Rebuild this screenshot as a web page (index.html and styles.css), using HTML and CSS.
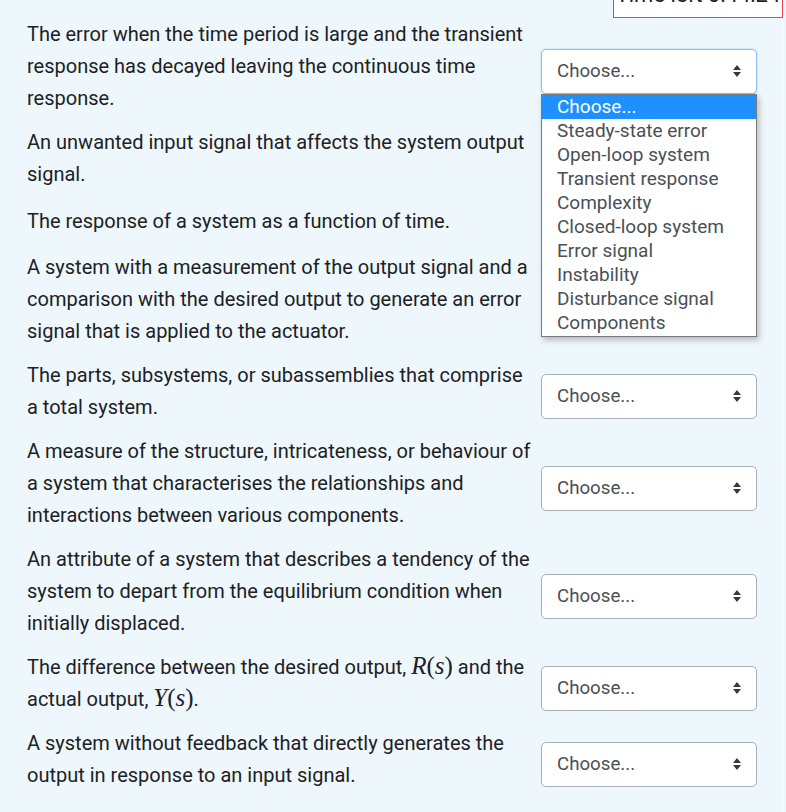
FILE: index.html
```html
<!DOCTYPE html>
<html>
<head>
<meta charset="utf-8">
<link rel="stylesheet" href="styles.css">
</head>
<body>
<div class="page">
  <div class="timer">Time left 0:44:24</div>
  <div class="rows">
    <div class="row">
      <p class="term">The error when the time period is large and the transient response has decayed leaving the continuous time response.</p>
      <div class="sel focus"><span>Choose...</span><svg class="arr" width="10" height="16" viewBox="0 0 10 16"><path d="M1 7 L5 2 L9 7 Z M1 9 L5 14 L9 9 Z" fill="#343a40"/></svg></div>
    </div>
    <div class="row">
      <p class="term">An unwanted input signal that affects the system output signal.</p>
      <div class="sel"><span>Choose...</span><svg class="arr" width="10" height="16" viewBox="0 0 10 16"><path d="M1 7 L5 2 L9 7 Z M1 9 L5 14 L9 9 Z" fill="#343a40"/></svg></div>
    </div>
    <div class="row">
      <p class="term">The response of a system as a function of time.</p>
      <div class="sel"><span>Choose...</span><svg class="arr" width="10" height="16" viewBox="0 0 10 16"><path d="M1 7 L5 2 L9 7 Z M1 9 L5 14 L9 9 Z" fill="#343a40"/></svg></div>
    </div>
    <div class="row">
      <p class="term">A system with a measurement of the output signal and a comparison with the desired output to generate an error signal that is applied to the actuator.</p>
      <div class="sel"><span>Choose...</span><svg class="arr" width="10" height="16" viewBox="0 0 10 16"><path d="M1 7 L5 2 L9 7 Z M1 9 L5 14 L9 9 Z" fill="#343a40"/></svg></div>
    </div>
    <div class="row">
      <p class="term">The parts, subsystems, or subassemblies that comprise a total system.</p>
      <div class="sel"><span>Choose...</span><svg class="arr" width="10" height="16" viewBox="0 0 10 16"><path d="M1 7 L5 2 L9 7 Z M1 9 L5 14 L9 9 Z" fill="#343a40"/></svg></div>
    </div>
    <div class="row">
      <p class="term">A measure of the structure, intricateness, or behaviour of a system that characterises the relationships and interactions between various components.</p>
      <div class="sel"><span>Choose...</span><svg class="arr" width="10" height="16" viewBox="0 0 10 16"><path d="M1 7 L5 2 L9 7 Z M1 9 L5 14 L9 9 Z" fill="#343a40"/></svg></div>
    </div>
    <div class="row">
      <p class="term">An attribute of a system that describes a tendency of the system to depart from the equilibrium condition when initially displaced.</p>
      <div class="sel"><span>Choose...</span><svg class="arr" width="10" height="16" viewBox="0 0 10 16"><path d="M1 7 L5 2 L9 7 Z M1 9 L5 14 L9 9 Z" fill="#343a40"/></svg></div>
    </div>
    <div class="row">
      <p class="term">The difference between the desired output, <span class="math"><i>R</i>(<i>s</i>)</span> and the actual output, <span class="math"><i>Y</i>(<i>s</i>)</span>.</p>
      <div class="sel"><span>Choose...</span><svg class="arr" width="10" height="16" viewBox="0 0 10 16"><path d="M1 7 L5 2 L9 7 Z M1 9 L5 14 L9 9 Z" fill="#343a40"/></svg></div>
    </div>
    <div class="row">
      <p class="term">A system without feedback that directly generates the output in response to an input signal.</p>
      <div class="sel"><span>Choose...</span><svg class="arr" width="10" height="16" viewBox="0 0 10 16"><path d="M1 7 L5 2 L9 7 Z M1 9 L5 14 L9 9 Z" fill="#343a40"/></svg></div>
    </div>
  </div>
  <ul class="dropdown">
    <li class="hl">Choose...</li>
    <li>Steady-state error</li>
    <li>Open-loop system</li>
    <li>Transient response</li>
    <li>Complexity</li>
    <li>Closed-loop system</li>
    <li>Error signal</li>
    <li>Instability</li>
    <li>Disturbance signal</li>
    <li>Components</li>
  </ul>
</div>
</body>
</html>
```

FILE: styles.css
```css
html, body {
  margin: 0;
  padding: 0;
  background: #eef7fb;
}
body {
  font-family: Roboto, "Liberation Sans", sans-serif;
  color: #1d2125;
}
.page {
  position: relative;
  width: 783px;
  min-height: 812px;
  border-right: 1px solid #f6fbfd;
  overflow: hidden;
}
.timer {
  position: absolute;
  left: 613px;
  top: -32px;
  box-sizing: border-box;
  width: 170px;
  height: 50px;
  padding-top: 13px;
  border: 1px solid #e8424a;
  background: #fff;
  font-size: 22px;
  line-height: 26px;
  text-align: center;
  white-space: nowrap;
  color: #1d2125;
}
.rows {
  padding: 12px 0 0 27px;
}
.row {
  display: flex;
  align-items: center;
}
.term {
  width: 505px;
  margin: 0;
  padding: 6px 0;
  font-size: 20px;
  line-height: 32px;
}
.sel {
  box-sizing: border-box;
  width: 216px;
  height: 45px;
  margin: 7px 0 -3px 9px;
  flex: none;
  border: 1px solid #a7b0b8;
  border-radius: 5px;
  background: #fff;
  display: flex;
  align-items: center;
  justify-content: space-between;
  padding: 0 14px 0 15px;
  font-size: 18.7px;
  color: #495057;
}
.sel.focus {
  border-color: #8dc2f2;
  box-shadow: 0 0 0 1px rgba(140, 195, 245, 0.25);
}
.math {
  font-family: "Liberation Serif", "DejaVu Serif", serif;
  font-size: 25px;
  line-height: 1;
}
.dropdown {
  position: absolute;
  left: 541px;
  top: 94px;
  width: 214px;
  margin: 0;
  padding: 0 0 1px 0;
  list-style: none;
  background: #fff;
  border: 1px solid #7a7a7a;
  box-shadow: 2px 3px 6px rgba(0, 0, 0, 0.25);
}
.dropdown li {
  height: 24px;
  line-height: 24px;
  padding-left: 15px;
  font-size: 19px;
  color: #495057;
}
.dropdown li.hl {
  background: #1e90ff;
  color: #fff;
}
```
